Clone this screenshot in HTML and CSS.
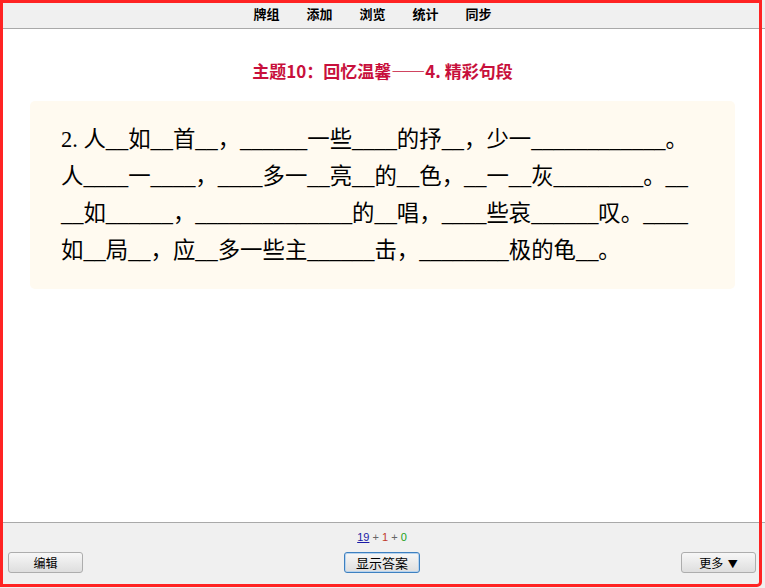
FILE: index.html
```html
<!DOCTYPE html>
<html lang="zh">
<head>
<meta charset="utf-8">
<link rel="stylesheet" href="styles.css">
</head>
<body>
<div class="page">
  <div class="topbar">
    <nav class="nav">
      <a class="nav-item">牌组</a>
      <a class="nav-item">添加</a>
      <a class="nav-item">浏览</a>
      <a class="nav-item">统计</a>
      <a class="nav-item">同步</a>
    </nav>
  </div>
  <main class="content">
    <h1 class="title">主题10：回忆温馨——4. 精彩句段</h1>
    <div class="card">
      <p class="cloze">2. 人__如__首__，______一些____的抒__，少一____________。人____一____，____多一__亮__的__色，__一__灰________。____如______，______________的__唱，____些哀______叹。____如__局__，应__多一些主______击，________极的龟__。</p>
    </div>
  </main>
  <footer class="bottombar">
    <div class="counts"><span class="c-new">19</span> <span class="c-plus">+</span> <span class="c-learn">1</span> <span class="c-plus">+</span> <span class="c-review">0</span></div>
    <div class="buttons">
      <button class="btn">编辑</button>
      <button class="btn btn-focus">显示答案</button>
      <button class="btn">更多 <span class="caret">▼</span></button>
    </div>
  </footer>
  <div class="frame"></div>
</div>
</body>
</html>
```

FILE: styles.css
```css
html, body {
  margin: 0;
  padding: 0;
  background: #ffffff;
}

.page {
  position: relative;
  width: 765px;
  height: 588px;
  display: flex;
  flex-direction: column;
  font-family: "Noto Sans CJK SC", "Liberation Sans", sans-serif;
  overflow: hidden;
}

.frame {
  position: absolute;
  left: 0;
  top: 0;
  width: 762px;
  height: 587px;
  box-sizing: border-box;
  border: 3px solid #ff2323;
  border-radius: 0 0 5px 0;
  pointer-events: none;
}

.topbar {
  height: 28px;
  background: #f0f0f0;
  border-bottom: 1px solid #a9a9a9;
  display: flex;
  align-items: center;
  justify-content: center;
  flex-shrink: 0;
}

.nav {
  display: flex;
  gap: 27px;
  padding-right: 20px;
}

.nav-item {
  font-size: 13px;
  font-weight: bold;
  color: #000;
  line-height: 28px;
}

.content {
  flex: 1;
  padding: 30px 30px 0 30px;
}

.title {
  margin: 0 0 19px 0;
  text-align: center;
  font-size: 17px;
  line-height: 23px;
  font-weight: bold;
  color: #c8103c;
}

.card {
  background: #fffaf0;
  border-radius: 5px;
  padding: 20px 39px 20px 31px;
}

.cloze {
  margin: 0;
  font-family: "Liberation Serif", "Noto Sans CJK SC", serif;
  font-size: 22.4px;
  line-height: 37px;
  color: #000;
  word-break: break-all;
}

.bottombar {
  height: 66px;
  background: #f0f0f0;
  border-top: 1px solid #a9a9a9;
  flex-shrink: 0;
  padding: 7px 9px 0 8px;
  box-sizing: border-box;
}

.counts {
  text-align: center;
  font-family: "Liberation Sans", sans-serif;
  font-size: 11px;
  line-height: 14px;
  color: #555;
}

.c-new {
  color: #1a1aa6;
  text-decoration: underline;
}

.c-plus {
  color: #666;
}

.c-learn {
  color: #c0392b;
}

.c-review {
  color: #1aa01a;
}

.buttons {
  margin-top: 8px;
  display: flex;
  justify-content: space-between;
}

.btn {
  width: 75px;
  height: 21px;
  padding: 0;
  border: 1px solid #adadad;
  border-radius: 3px;
  background: linear-gradient(#f7f7f7, #dedede);
  font-family: "Noto Sans CJK SC", sans-serif;
  font-size: 12px;
  line-height: 19px;
  color: #000;
}

.btn-focus {
  width: 76px;
  border-color: #3d80c0;
  box-shadow: inset 0 0 0 1px #b7d3ee;
  font-size: 13px;
}

.caret {
  font-size: 10px;
  margin-left: 2px;
}
```
